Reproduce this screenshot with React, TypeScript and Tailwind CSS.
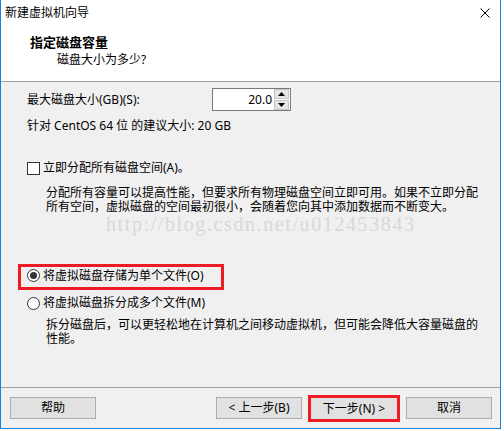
function Radio({ checked }: { checked?: boolean }) {
  return (
    <span className="w-[13px] h-[13px] rounded-full border border-[#333333] bg-white flex items-center justify-center shrink-0">
      {checked && <span className="w-[7px] h-[7px] rounded-full bg-[#333333]" />}
    </span>
  );
}

function Button({ label }: { label: string }) {
  return (
    <div className="w-[86px] h-[22px] bg-[#e1e1e1] border border-[#adadad] flex items-center justify-center">
      {label}
    </div>
  );
}

export default function App() {
  return (
    <div className="w-[504px] h-[431px] bg-white text-[12px] text-black font-['Noto_Sans','Noto_Sans_CJK_SC',sans-serif]">
      <div className="w-[501px] h-[429px] border-x border-b border-[#1883d7] bg-[#f0f0f0] flex flex-col">
        {/* title + header */}
        <div className="h-[82px] bg-white border-b border-[#a0a0a0]">
          <div className="h-[26px] flex items-center justify-between pl-[4px] pr-[10px]">
            <span className="leading-[16px]">新建虚拟机向导</span>
            <svg width="10" height="10" viewBox="0 0 10 10">
              <path d="M0.5 0.5 L9.5 9.5 M9.5 0.5 L0.5 9.5" stroke="#000" strokeWidth="1" />
            </svg>
          </div>
          <div className="mt-[8px] pl-[29px] text-[13px] font-bold leading-[16px]">指定磁盘容量</div>
          <div className="mt-[2px] pl-[56px] leading-[16px]">磁盘大小为多少?</div>
        </div>

        {/* body */}
        <div className="relative flex-1 pl-[26px]">
          <div className="mt-[6px] h-[23px] flex items-center">
            <span className="w-[185px] leading-[16px]">最大磁盘大小(GB)(S):</span>
            <div className="w-[79px] h-[23px] bg-white border border-[#7a7a7a] flex items-stretch">
              <span className="flex-1 flex items-center justify-end pr-[2px] leading-[16px]">20.0</span>
              <div className="w-[15px] flex flex-col gap-[1px] py-[0px] mr-[1px]">
                <div className="h-[10px] bg-[#e5e5e5] border border-[#c4c4c4] flex items-center justify-center">
                  <svg width="7" height="4" viewBox="0 0 7 4">
                    <path d="M3.5 0 L7 4 L0 4 Z" fill="#000" />
                  </svg>
                </div>
                <div className="h-[10px] bg-[#e5e5e5] border border-[#c4c4c4] flex items-center justify-center">
                  <svg width="7" height="4" viewBox="0 0 7 4">
                    <path d="M0 0 L7 0 L3.5 4 Z" fill="#000" />
                  </svg>
                </div>
              </div>
            </div>
          </div>

          <div className="mt-[7px] h-[16px] leading-[16px]">针对 CentOS 64 位 的建议大小: 20 GB</div>

          <div className="mt-[26px] h-[16px] flex items-center gap-[3px]">
            <span className="w-[13px] h-[13px] border border-[#333333] bg-white shrink-0" />
            <span className="leading-[16px]">立即分配所有磁盘空间(A)。</span>
          </div>

          <div className="mt-[10px] pl-[19px] leading-[14px] whitespace-nowrap">
            分配所有容量可以提高性能，但要求所有物理磁盘空间立即可用。如果不立即分配
            <br />
            所有空间，虚拟磁盘的空间最初很小，会随着您向其中添加数据而不断变大。
          </div>

          <div className="mt-[50px] -ml-[9px] w-[206px] h-[26px] border-[3px] border-[#ed1c24] pl-[6px] pb-[3px] flex items-center gap-[3px]">
            <Radio checked />
            <span className="leading-[16px]">将虚拟磁盘存储为单个文件(O)</span>
          </div>

          <div className="mt-[5px] h-[16px] flex items-center gap-[3px]">
            <Radio />
            <span className="leading-[16px]">将虚拟磁盘拆分成多个文件(M)</span>
          </div>

          <div className="mt-[7px] pl-[19px] leading-[14px] whitespace-nowrap">
            拆分磁盘后，可以更轻松地在计算机之间移动虚拟机，但可能会降低大容量磁盘的
            <br />
            性能。
          </div>

          {/* watermark */}
          <div className="absolute left-[105px] top-[132px] pointer-events-none font-['Liberation_Serif',serif] text-[20px] leading-[20px] tracking-[1.6px] text-[#d9d9d9]">
            http://blog.csdn.net/u012453843
          </div>
        </div>

        {/* footer */}
        <div className="h-[41px] border-t border-[#a0a0a0] pt-[9px] pl-[9px] pr-[8px] flex items-start">
          <Button label="帮助" />
          <div className="ml-auto flex items-start gap-[6px]">
            <Button label="< 上一步(B)" />
            <div className="-mt-[2px] w-[92px] h-[27px] border-[3px] border-[#ed1c24] bg-[#e1e1e1] flex items-center justify-center">
              下一步(N) &gt;
            </div>
            <Button label="取消" />
          </div>
        </div>
      </div>
    </div>
  );
}
